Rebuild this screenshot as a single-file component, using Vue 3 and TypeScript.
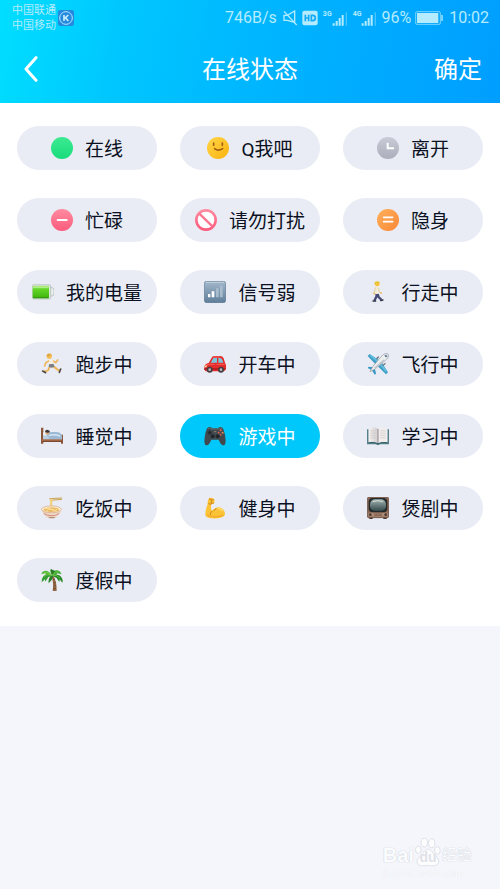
<script setup lang="ts">
import { ref } from 'vue'

interface Status {
  id: string
  label: string
}

const statuses: Status[] = [
  { id: 'online', label: '在线' },
  { id: 'qme', label: 'Q我吧' },
  { id: 'away', label: '离开' },
  { id: 'busy', label: '忙碌' },
  { id: 'dnd', label: '请勿打扰' },
  { id: 'hidden', label: '隐身' },
  { id: 'battery', label: '我的电量' },
  { id: 'signal', label: '信号弱' },
  { id: 'walk', label: '行走中' },
  { id: 'run', label: '跑步中' },
  { id: 'car', label: '开车中' },
  { id: 'plane', label: '飞行中' },
  { id: 'bed', label: '睡觉中' },
  { id: 'game', label: '游戏中' },
  { id: 'book', label: '学习中' },
  { id: 'noodles', label: '吃饭中' },
  { id: 'muscle', label: '健身中' },
  { id: 'tv', label: '煲剧中' },
  { id: 'palm', label: '度假中' },
]

const selected = ref('game')
</script>

<template>
  <div class="page">
    <svg class="sprite" aria-hidden="true">
      <defs>
        <linearGradient id="g-green" x1="0" y1="0" x2="0" y2="1"><stop offset="0" stop-color="#3dea91" /><stop offset="1" stop-color="#18dc7c" /></linearGradient>
        <linearGradient id="g-yellow" x1="0" y1="0" x2="1" y2="1"><stop offset="0" stop-color="#ffd54a" /><stop offset="1" stop-color="#fbb30c" /></linearGradient>
        <linearGradient id="g-grey" x1="0" y1="0" x2="0" y2="1"><stop offset="0" stop-color="#c9ccd6" /><stop offset="1" stop-color="#abaebb" /></linearGradient>
        <linearGradient id="g-pink" x1="0" y1="0" x2="0" y2="1"><stop offset="0" stop-color="#ff8ba0" /><stop offset="1" stop-color="#fb5b7c" /></linearGradient>
        <linearGradient id="g-orange" x1="0" y1="0" x2="1" y2="1"><stop offset="0" stop-color="#ffb05c" /><stop offset="1" stop-color="#fa8735" /></linearGradient>
        <linearGradient id="g-cell" x1="0" y1="0" x2="0" y2="1"><stop offset="0" stop-color="#b5ec8a" /><stop offset=".3" stop-color="#62d526" /><stop offset="1" stop-color="#3db30c" /></linearGradient>
        <linearGradient id="g-signal" x1="0" y1="0" x2="0" y2="1"><stop offset="0" stop-color="#a3b8cb" /><stop offset="1" stop-color="#5f7d9a" /></linearGradient>
        <linearGradient id="g-page" x1="0" y1="0" x2="1" y2="0"><stop offset="0" stop-color="#f6f2f0" /><stop offset="1" stop-color="#cfcdd0" /></linearGradient>
        <linearGradient id="g-screen" x1="0" y1="0" x2="0" y2="1"><stop offset="0" stop-color="#a3b4b2" /><stop offset="1" stop-color="#33484a" /></linearGradient>
      </defs>

      <symbol id="i-online" viewBox="0 0 66 66"><circle cx="33" cy="33" r="33" fill="url(#g-green)" /></symbol>

      <symbol id="i-qme" viewBox="0 0 66 66">
        <circle cx="33" cy="33" r="33" fill="url(#g-yellow)" />
        <path d="M20 18v7M46 18v7M23 35q10 9 24 0" fill="none" stroke="#a35f14" stroke-width="5" stroke-linecap="round" />
      </symbol>

      <symbol id="i-away" viewBox="0 0 66 66">
        <circle cx="33" cy="33" r="33" fill="url(#g-grey)" />
        <path d="M32 17v17h19" fill="none" stroke="#fff" stroke-width="6" />
      </symbol>

      <symbol id="i-busy" viewBox="0 0 66 66">
        <circle cx="33" cy="33" r="33" fill="url(#g-pink)" />
        <path d="M20 33h27" stroke="#fff" stroke-width="6" stroke-linecap="round" />
      </symbol>

      <symbol id="i-dnd" viewBox="0 0 66 66">
        <circle cx="33" cy="33" r="29" fill="#fff" stroke="url(#g-pink)" stroke-width="8" />
        <path d="M13 14l40 39" stroke="#fb7590" stroke-width="7" />
      </symbol>

      <symbol id="i-hidden" viewBox="0 0 66 66">
        <circle cx="33" cy="33" r="33" fill="url(#g-orange)" />
        <path d="M20 25h27M20 38h27" stroke="#fff" stroke-width="5" stroke-linecap="round" />
      </symbol>

      <symbol id="i-battery" viewBox="0 0 66 66">
        <path d="M54 20h6q6 1 6 8v9q0 7-6 8h-6z" fill="#e9eeee" stroke="#a5b1ac" stroke-width="2" />
        <rect x="1" y="11" width="55" height="43" rx="4" fill="#dce5dd" stroke="#b0bcb2" stroke-width="2" />
        <rect x="2" y="14" width="49" height="38" rx="3" fill="url(#g-cell)" />
        <path d="M4 19h45" stroke="#b8f092" stroke-width="3" />
        <path d="M3 50h47" stroke="#32930f" stroke-width="3" />
      </symbol>

      <symbol id="i-signal" viewBox="0 0 66 66">
        <rect x="1" y="1" width="64" height="64" rx="7" fill="url(#g-signal)" stroke="#58758f" stroke-width="2" />
        <path d="M5 4h56" stroke="#c3d1dd" stroke-width="3" />
        <path d="M12 39h7v10h-7zM23 31h8v18h-8z" fill="#fff" />
        <path d="M36 22h8v27h-8zM48 14h8v35h-8z" fill="#a9bccd" />
      </symbol>

      <symbol id="i-walk" viewBox="0 0 66 66">
        <path d="M27 36l2 9-7 14M31 37l4 11 9 9" fill="none" stroke="#454a78" stroke-width="7" />
        <path d="M18 60h8M41 59l7-2" stroke="#323345" stroke-width="4" stroke-linecap="round" />
        <path d="M25 18q6-4 10 0v21H24z" fill="#f3edd8" />
        <path d="M26 20l-5 14 3 5M34 22l4 12 4 2" fill="none" stroke="#e4d8b4" stroke-width="4" stroke-linecap="round" />
        <path d="M21 37l1 1M42 36h1" stroke="#f0ac37" stroke-width="4" stroke-linecap="round" />
        <circle cx="31" cy="9" r="7" fill="#fac13a" />
        <path d="M22 10q-1-9 9-9 8 0 8 6l-9-1-3 7z" fill="#e9c538" />
      </symbol>

      <symbol id="i-run" viewBox="0 0 66 66">
        <path d="M28 38L21 52l-12 4M34 38l12 9 8 6" fill="none" stroke="#efb55b" stroke-width="6" stroke-linejoin="round" />
        <path d="M5 54l9 5M59 48l-4 10" stroke="#50463f" stroke-width="5" stroke-linecap="round" />
        <path d="M25 23l-11 7-3 9M35 23l9 6 6-8" fill="none" stroke="#efb55b" stroke-width="5" stroke-linecap="round" stroke-linejoin="round" />
        <path d="M24 18l12 2 1 17-13 1z" fill="#f8f0df" />
        <path d="M24 34l13-2 4 9-9 3-9-2z" fill="#7c8085" />
        <circle cx="25" cy="10" r="8" fill="#f8c157" />
        <path d="M16 8q4-9 12-6l6 5-8 1-3 4z" fill="#dda647" />
      </symbol>

      <symbol id="i-car" viewBox="0 0 66 66">
        <path d="M1 41q1-8 13-11l9-16q2-4 7-5h18q8 0 11 7l5 16q4 4 2 15-1 6-9 8H6q-5-1-5-14z" fill="#e22d2c" />
        <path d="M20 29l8-14h11v14zM43 15h5q5 0 7 5l3 9H43z" fill="#7ec5dc" />
        <path d="M27 12h20" stroke="#f36b61" stroke-width="3" />
        <path d="M4 37q12-5 28-3M38 34h24" stroke="#fb5e52" stroke-width="3" fill="none" />
        <path d="M3 38l7-1-3 6H2z" fill="#ffe4b0" />
        <path d="M0 48h64" stroke="#a4191d" stroke-width="4" />
        <circle cx="17" cy="50" r="9" fill="#443e42" /><circle cx="17" cy="50" r="4" fill="#b9b5b8" />
        <circle cx="51" cy="50" r="9" fill="#443e42" /><circle cx="51" cy="50" r="4" fill="#b9b5b8" />
      </symbol>

      <symbol id="i-plane" viewBox="0 0 66 66">
        <path d="M39 24L8 3 2 9l25 26zM43 27l20 31-6 6-26-26z" fill="#3c9dc8" />
        <path d="M34 20L11 5l-4 3 24 20zM46 31l13 23-3 4-17-22z" fill="#62bddf" />
        <path d="M19 43L5 41l-3 4 13 7zM24 48l3 14-4 3-8-13z" fill="#3697c1" />
        <path d="M63 3c-8-4-15 2-21 8L17 41l-8 15 15-8 30-25C61 17 68 10 63 3z" fill="#eceef0" stroke="#8b969f" stroke-width="2" />
        <path d="M23 45L51 21" stroke="#bec5cc" stroke-width="4" />
        <path d="M57 5l5 5-5 3-5-5z" fill="#587487" />
        <path d="M29 17l5-5M48 37l6-5" stroke="#68737c" stroke-width="4" stroke-linecap="round" />
      </symbol>

      <symbol id="i-bed" viewBox="0 0 66 66">
        <path d="M0 8h7v48H0zM60 29h6v27h-6z" fill="#8d573c" />
        <path d="M3 42h60v9H3z" fill="#a96d4c" />
        <path d="M4 49h60" stroke="#724127" stroke-width="3" />
        <path d="M7 28q9-7 21-3l35 7v11H7z" fill="#b8cee3" />
        <path d="M18 31q3-10 14-10h14q12 0 16 10v11H27z" fill="#9bb9d5" />
        <path d="M23 32q15-6 34 1" stroke="#d4e4f1" stroke-width="4" fill="none" />
        <path d="M6 26q0-7 9-5l5 8-11 3z" fill="#ecf4fa" />
        <circle cx="19" cy="23" r="6" fill="#d9a878" />
        <path d="M12 21q1-8 9-6 6 1 6 7l-8 1z" fill="#3d3538" />
      </symbol>

      <symbol id="i-game" viewBox="0 0 66 66">
        <path d="M11 8q4-4 10-1l3 3h18l3-3q6-3 10 1 5 5 8 23 5 28-4 30-8 1-15-17H22Q15 62 7 61-2 59 3 31 6 13 11 8z" fill="#424a50" />
        <path d="M12 11q5-4 9 1h24q4-5 9-1" fill="none" stroke="#727b80" stroke-width="2" />
        <path d="M17 17v12M11 23h12" stroke="#242a2f" stroke-width="5" />
        <circle cx="26" cy="34" r="6" fill="#20262a" /><circle cx="41" cy="34" r="6" fill="#20262a" />
        <circle cx="50" cy="16" r="3" fill="#e9684d" /><circle cx="44" cy="23" r="3" fill="#d8594b" />
        <circle cx="56" cy="23" r="3" fill="#e08d54" /><circle cx="50" cy="29" r="3" fill="#c85a4a" />
        <path d="M30 20h7" stroke="#9b8071" stroke-width="3" />
      </symbol>

      <symbol id="i-book" viewBox="0 0 66 66">
        <path d="M0 13h5v40h56V13h5v45H39l-6 3-7-3H0z" fill="#557f89" />
        <path d="M5 10q21-7 28 2v44q-10-6-28-3z" fill="url(#g-page)" />
        <path d="M61 10q-21-7-28 2v44q10-6 28-3z" fill="#f1eded" />
        <path d="M33 12v44" stroke="#948b8e" stroke-width="3" />
        <path d="M10 18l16-1M10 25l16-1M10 32l16-1M10 39l16-1M40 17l16 1M40 24l16 1M40 31l16 1M40 38l16 1" stroke="#ccc1c3" stroke-width="2" />
        <path d="M4 53q19-3 29 3 10-6 29-3" fill="none" stroke="#315e69" stroke-width="3" />
      </symbol>

      <symbol id="i-noodles" viewBox="0 0 66 66">
        <path d="M26 5l36-2M28 10l34-3" stroke="#c9a14f" stroke-width="3" stroke-linecap="round" />
        <path d="M29 5v30M34 5q-5 15 1 30" stroke="#efd282" stroke-width="4" fill="none" />
        <path d="M3 37q3 24 22 26h14q18-3 21-26z" fill="#eed6c6" />
        <path d="M7 47q26 15 49 0l-3 5q-22 12-43 0z" fill="#d08b78" />
        <path d="M21 60h23l-5 4H26z" fill="#b88c79" />
        <ellipse cx="31" cy="37" rx="30" ry="10" fill="#fff5df" stroke="#d3a077" stroke-width="2" />
        <ellipse cx="31" cy="38" rx="24" ry="7" fill="#e9b867" />
        <path d="M12 36q9-7 18 1 10 8 20-1M17 41q8-9 24-1" fill="none" stroke="#ffe199" stroke-width="3" />
      </symbol>

      <symbol id="i-muscle" viewBox="0 0 66 66">
        <path d="M14 5q7-6 15 0 5 5 1 14l-8 3q-3 12 2 19Q43 23 57 37q10 13 3 20-10 9-37 7Q6 63 4 54q-1-12 7-33-1-9 3-16z" fill="#fbc335" />
        <path d="M15 5l9 4 5-1M23 9l-2 10 9-1M13 20l9 2M25 42q-7 5-6 12M37 34q-6 3-7 8" fill="none" stroke="#cf8620" stroke-width="3" />
        <path d="M9 54q18 9 49 1" fill="none" stroke="#f3a92b" stroke-width="4" />
        <path d="M41 35q9-1 15 7" fill="none" stroke="#ffe079" stroke-width="4" />
      </symbol>

      <symbol id="i-tv" viewBox="0 0 66 66">
        <path d="M7 61h10v5H7zM49 61h10v5H49z" fill="#49362e" />
        <rect x="1" y="1" width="64" height="61" rx="4" fill="#8a6551" stroke="#5e4438" stroke-width="2" />
        <rect x="4" y="47" width="58" height="12" fill="#ae8b76" />
        <rect x="5" y="3" width="56" height="43" rx="12" fill="#24292b" />
        <rect x="9" y="7" width="48" height="35" rx="15" fill="url(#g-screen)" />
        <path d="M17 14q16-6 31 0" stroke="#d5dedb" stroke-width="3" fill="none" />
        <circle cx="10" cy="53" r="4" fill="#443a35" /><circle cx="56" cy="53" r="4" fill="#443a35" />
        <path d="M21 51h24M21 55h24" stroke="#6b4d3f" stroke-width="2" />
      </symbol>

      <symbol id="i-palm" viewBox="0 0 66 66">
        <path d="M31 20q8 20 4 46h12Q48 37 36 18z" fill="#936744" />
        <path d="M36 32l6-2M38 42l6-2M38 51l7-2M36 59l9-1" stroke="#60432e" stroke-width="2" />
        <path d="M32 20Q19 8 7 22q-6 8-5 18l10-9 1 7 9-14 10-3z" fill="#379c31" />
        <path d="M34 20Q55 12 62 26q5 8 2 15l-8-10-1 8-8-12z" fill="#258827" />
        <path d="M33 20Q20-3 4 9l-3 7 11-3 6 4z" fill="#55b83a" />
        <path d="M33 20Q38-3 56 7l6 9-13-3-3 6z" fill="#42a934" />
        <path d="M30 19Q21 30 23 43l9-10 5-14zM33 19Q25 3 30 0l12 6z" fill="#287f24" />
        <path d="M33 19Q20 13 9 22M34 19q14-3 23 9M32 18Q21 7 10 10M35 18q8-12 18-9" fill="none" stroke="#83d24f" stroke-width="2" />
      </symbol>
    </svg>

    <header class="top">
      <div class="statusbar">
        <div class="carriers"><span>中国联通</span><span>中国移动</span></div>
        <svg class="kbadge" viewBox="0 0 48 48" aria-hidden="true">
          <rect width="48" height="48" rx="7" fill="#2489df" />
          <circle cx="24" cy="24" r="19" fill="none" stroke="#b8e7ff" stroke-width="3" />
          <path d="M18 15v18M31 15L20 25M22 23l9 10" fill="none" stroke="#c9edff" stroke-width="5" />
        </svg>
        <div class="system">
          <span>746B/s</span>
          <svg class="mute" viewBox="0 0 45 48" aria-hidden="true">
            <path d="M3 16h10L35 3v34L13 31H3zM3 4l38 41" fill="none" stroke="currentColor" stroke-width="4" />
          </svg>
          <svg class="hd" viewBox="0 0 48 48" aria-hidden="true">
            <rect x="1" y="2" width="46" height="44" rx="6" fill="currentColor" />
            <path d="M10 14v20M20 14v20M10 24h10M28 16h4q8 0 8 8t-8 8h-4z" fill="none" stroke="#12a9f5" stroke-width="5" />
          </svg>
          <span class="cell">
            <small>3G</small>
            <svg class="bars" viewBox="0 0 48 42" aria-hidden="true"><path d="M2 34h6v7H2zM11 27h6v14h-6zM20 18h6v23h-6zM29 9h6v32h-6z" fill="currentColor" /><path d="M41 1h4v40h-4z" fill="currentColor" opacity=".4" /></svg>
          </span>
          <span class="cell">
            <small>4G</small>
            <svg class="bars" viewBox="0 0 48 42" aria-hidden="true"><path d="M2 34h6v7H2zM11 27h6v14h-6zM20 18h6v23h-6zM29 9h6v32h-6z" fill="currentColor" /><path d="M41 1h4v40h-4z" fill="currentColor" opacity=".4" /></svg>
          </span>
          <span class="percent">96%</span>
          <svg class="power" viewBox="0 0 84 42" aria-hidden="true">
            <rect x="2" y="2" width="74" height="38" rx="4" fill="none" stroke="currentColor" stroke-width="2" />
            <rect x="6" y="6" width="64" height="30" fill="currentColor" />
            <path d="M81 12v18" stroke="currentColor" stroke-width="4" />
          </svg>
          <span class="clock">10:02</span>
        </div>
      </div>

      <nav class="nav">
        <button class="back" type="button" aria-label="返回">
          <svg viewBox="0 0 42 78" aria-hidden="true"><path d="M36 5L6 39l30 34" fill="none" stroke="currentColor" stroke-width="9" stroke-linecap="round" stroke-linejoin="round" /></svg>
        </button>
        <h1>在线状态</h1>
        <button class="confirm" type="button">确定</button>
      </nav>
    </header>

    <main class="options" role="radiogroup" aria-label="在线状态">
      <label v-for="s in statuses" :key="s.id" class="pill" :class="{ active: selected === s.id }">
        <input v-model="selected" type="radio" name="status" :value="s.id" />
        <svg class="icon" aria-hidden="true"><use :href="'#i-' + s.id" /></svg>
        <span class="label">{{ s.label }}</span>
      </label>
    </main>

    <footer class="watermark">
      <div class="brand">
        <span>Bai</span>
        <span class="paw">
          <svg viewBox="0 0 84 96" aria-hidden="true">
            <g fill="#fdfdfe" stroke="#dcdfe6" stroke-width="3">
              <ellipse cx="11" cy="41" rx="9" ry="12" />
              <ellipse cx="30" cy="18" rx="10" ry="14" />
              <ellipse cx="54" cy="20" rx="10" ry="14" />
              <ellipse cx="72" cy="43" rx="9" ry="12" />
              <path d="M41 39c11 0 15 12 24 20s13 14 10 24-16 10-34 8C24 93 11 94 8 83s3-17 11-24 12-20 22-20z" />
            </g>
          </svg>
          <span class="du">du</span>
        </span>
        <span class="cn">经验</span>
      </div>
      <div class="site">jingyan.baidu.com</div>
    </footer>
  </div>
</template>

<style>
body {
  margin: 0;
  background: #f4f6fb;
}
</style>

<style scoped>
.page {
  position: relative;
  min-height: 100vh;
  color: #0b1122;
  background: #f4f6fb;
  font-family: Roboto, "Noto Sans CJK SC", sans-serif;
}

.sprite {
  position: absolute;
  width: 0;
  height: 0;
}

.top {
  color: #fff;
  background: linear-gradient(100deg, #00deff 0%, #00c6ff 25%, #00b4ff 55%, #009eff 100%);
}

.statusbar {
  display: flex;
  align-items: center;
  height: 35px;
  padding: 0 11px 0 12px;
  color: #b4ebff;
}

.carriers {
  display: flex;
  flex-direction: column;
  font-size: 11px;
  line-height: 15px;
}

.kbadge {
  width: 16px;
  height: 16px;
  margin-left: 2px;
}

.system {
  display: flex;
  align-items: center;
  margin-left: auto;
  font-size: 16px;
  line-height: 20px;
}

.mute {
  width: 15px;
  height: 16px;
  margin-left: 6px;
}

.hd {
  width: 16px;
  height: 16px;
  margin-left: 4px;
}

.cell {
  display: flex;
  margin-left: 5px;
}

.cell small {
  font-size: 7px;
  line-height: 8px;
  font-weight: 700;
}

.bars {
  width: 16px;
  height: 14px;
  margin-top: 2px;
}

.percent {
  margin-left: 4px;
}

.power {
  width: 28px;
  height: 14px;
  margin-left: 4px;
}

.clock {
  margin-left: 6px;
}

.nav {
  display: grid;
  grid-template-columns: 1fr auto 1fr;
  align-items: center;
  height: 68px;
  padding: 0 18px;
}

.nav h1 {
  margin: 0;
  padding-top: 2px;
  font-size: 24px;
  font-weight: 400;
  line-height: 36px;
}

.nav button {
  padding: 0;
  border: 0;
  background: none;
  color: inherit;
  font: inherit;
  cursor: pointer;
}

.nav .back {
  justify-self: start;
  padding-left: 6px;
}

.back svg {
  display: block;
  width: 14px;
  height: 26px;
}

.nav .confirm {
  justify-self: end;
  padding-top: 2px;
  font-size: 24px;
  line-height: 36px;
}

.options {
  display: grid;
  grid-template-columns: repeat(3, 1fr);
  gap: 28px 23px;
  padding: 23px 17px 24px;
  background: #fff;
}

.pill {
  position: relative;
  display: flex;
  align-items: center;
  justify-content: center;
  gap: 12px;
  height: 44px;
  border-radius: 22px;
  background: #e9ecf4;
  font-size: 19px;
  line-height: 28px;
  white-space: nowrap;
  cursor: pointer;
}

.pill.active {
  background: #00c8fa;
  color: #fff;
}

.pill input {
  position: absolute;
  inset: 0;
  margin: 0;
  opacity: 0;
  cursor: pointer;
}

.label {
  padding-top: 3px;
}

.icon {
  flex: none;
  width: 22px;
  height: 22px;
}

.watermark {
  position: absolute;
  right: 28px;
  bottom: 9px;
  color: #fbfcfe;
  font-family: "Liberation Sans", "Noto Sans CJK SC", sans-serif;
  text-shadow: 0 0 1px #c6cad4, 0 0 1px #d5d8e0;
}

.brand {
  display: flex;
  align-items: flex-end;
  font-size: 20px;
  font-weight: 700;
  line-height: 24px;
}

.paw {
  position: relative;
  width: 28px;
  height: 30px;
}

.paw svg {
  display: block;
  width: 28px;
  height: 30px;
}

.du {
  position: absolute;
  inset: 12px 0 0;
  color: #dfe2e9;
  font-size: 14px;
  line-height: 16px;
  text-align: center;
  text-shadow: none;
}

.cn {
  font-size: 15px;
  font-weight: 400;
}

.site {
  font-size: 10px;
  line-height: 13px;
  text-shadow: 0 0 1px #dcdfe6;
}
</style>
